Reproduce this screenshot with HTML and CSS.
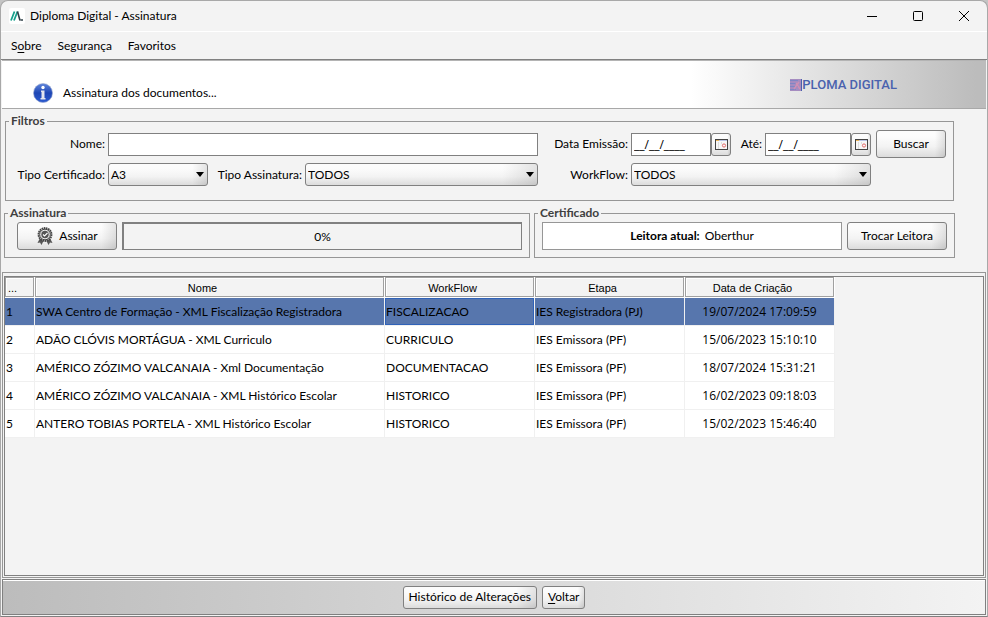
FILE: index.html
```html
<!DOCTYPE html>
<html lang="pt-BR">
<head>
    <meta charset="UTF-8">
    <meta name="viewport" content="width=device-width, initial-scale=1.0">
    <title>Diploma Digital - Assinatura</title>
    <link rel="stylesheet" href="styles.css">
</head>
<body>
    <div class="window">
        <header class="titlebar">
            <svg class="app-icon" viewBox="0 0 16 16" aria-hidden="true">
                <rect width="16" height="16" rx="2" fill="#fff"/>
                <path d="M2 12.500L5.500 3.500M5 12.500L8.500 3.500" stroke="#16a08c" stroke-width="1.800" fill="none"/>
                <path d="M8.500 3.500L11 12.500" stroke="#2d3e46" stroke-width="1.600" fill="none"/>
                <path d="M11.500 12h2.500" stroke="#2d3e46" stroke-width="1.400"/>
            </svg>
            <h1 class="title">Diploma Digital - Assinatura</h1>
            <div class="window-controls">
                <button type="button" aria-label="Minimizar"><svg viewBox="0 0 10 10"><path d="M0 5.500h10"/></svg></button>
                <button type="button" aria-label="Maximizar"><svg viewBox="0 0 10 10"><rect x="0.500" y="0.500" width="9" height="9" rx="1"/></svg></button>
                <button type="button" aria-label="Fechar"><svg viewBox="0 0 10 10"><path d="M0 0L10 10M10 0L0 10"/></svg></button>
            </div>
        </header>

        <nav class="menubar">
            <a href="#sobre">S<u>o</u>bre</a>
            <a href="#seguranca">Segurança</a>
            <a href="#favoritos">Favoritos</a>
        </nav>

        <div class="banner">
            <svg class="info-icon" viewBox="0 0 20 20" aria-hidden="true">
                <defs>
                    <linearGradient id="info" x1="0" y1="0" x2="0" y2="1">
                        <stop offset="0" stop-color="#5f86dc"/>
                        <stop offset="0.500" stop-color="#1e46b4"/>
                        <stop offset="1" stop-color="#2c5bd0"/>
                    </linearGradient>
                </defs>
                <circle cx="10" cy="10" r="9.500" fill="url(#info)" stroke="#9aa7cc" stroke-width="0.600"/>
                <circle cx="10" cy="4.500" r="1.700" fill="#fff"/>
                <path d="M8 7.500h3.500v7.500h1V16.500h-5v-1.500h1v-6h-.5z" fill="#e4e6ee"/>
            </svg>
            <p>Assinatura dos documentos...</p>
            <div class="brand">
                <svg viewBox="0 0 12 12" aria-hidden="true">
                    <rect width="11" height="12" fill="#a58cc0"/>
                    <path d="M0 1.500h8M0 4.500h7M0 7.500h8M0 10.500h6" stroke="#7f86c4" stroke-width="1"/>
                    <path d="M4 10L9 3M6 4l4 6" stroke="#cf8fb4" stroke-width="1.400"/>
                    <path d="M11.500 0v12" stroke="#4a62ae" stroke-width="1"/>
                </svg>
                <span>PLOMA DIGITAL</span>
            </div>
        </div>

        <main>
            <form class="forms">
                <fieldset class="filters">
                    <legend>Filtros</legend>
                    <div class="filter-grid">
                        <label for="nome">Nome:</label>
                        <input id="nome" class="nome" type="text">
                        <label for="emissao">Data Emissão:</label>
                        <div class="dates">
                            <input id="emissao" type="text" value="__/__/____">
                            <button type="button" class="calendar" aria-label="Escolher data de emissão">
                                <svg viewBox="0 0 13 11"><rect x="0.500" y="0.500" width="12" height="10" fill="#f7f7f7" stroke="#444"/><path d="M1 1.500h11" stroke="#b9c4e6"/><path d="M1 1.500h3" stroke="#e9b45a"/><path d="M3.500 3v7M6.500 3v2" stroke="#ddd"/><circle cx="9" cy="6.500" r="1.600" fill="none" stroke="#e26a6a"/></svg>
                            </button>
                            <label for="ate">Até:</label>
                            <input id="ate" type="text" value="__/__/____">
                            <button type="button" class="calendar" aria-label="Escolher data final">
                                <svg viewBox="0 0 13 11"><rect x="0.500" y="0.500" width="12" height="10" fill="#f7f7f7" stroke="#444"/><path d="M1 1.500h11" stroke="#b9c4e6"/><path d="M1 1.500h3" stroke="#e9b45a"/><path d="M3.500 3v7M6.500 3v2" stroke="#ddd"/><circle cx="9" cy="6.500" r="1.600" fill="none" stroke="#e26a6a"/></svg>
                            </button>
                        </div>
                        <button type="button" class="btn search">Buscar</button>

                        <label for="certificado">Tipo Certificado:</label>
                        <div class="combo"><select id="certificado"><option>A3</option></select></div>
                        <label for="assinatura">Tipo Assinatura:</label>
                        <div class="combo"><select id="assinatura"><option>TODOS</option></select></div>
                        <label for="workflow">WorkFlow:</label>
                        <div class="combo"><select id="workflow"><option>TODOS</option></select></div>
                    </div>
                </fieldset>

                <div class="panels">
                    <fieldset class="signing">
                        <legend>Assinatura</legend>
                        <div class="panel-row">
                            <button type="button" class="btn sign">
                                <svg viewBox="0 0 18 18" aria-hidden="true">
                                    <path d="M4 11L1.500 16l2.500-.5L5.500 18 8 13M14 11l2.500 5-2.500-.5-1.500 2.500L10 13" fill="#555"/>
                                    <circle cx="9" cy="7.500" r="6.500" fill="#eee" stroke="#444" stroke-width="1.800" stroke-dasharray="1.600 0.600"/>
                                    <circle cx="9" cy="7.500" r="5.300" fill="none" stroke="#444" stroke-width="1"/>
                                    <circle cx="9" cy="7.500" r="3.700" fill="#555"/>
                                    <path d="M7 7.500l1.500 1.500L11.500 6" fill="none" stroke="#fff" stroke-width="1.100"/>
                                </svg>
                                Assinar
                            </button>
                            <div class="progress" role="progressbar" aria-valuenow="0" aria-valuemin="0" aria-valuemax="100">0%</div>
                        </div>
                    </fieldset>
                    <fieldset class="certificate">
                        <legend>Certificado</legend>
                        <div class="panel-row">
                            <div class="reader"><b>Leitora atual:</b> Oberthur</div>
                            <button type="button" class="btn swap">Trocar Leitora</button>
                        </div>
                    </fieldset>
                </div>
            </form>

            <div class="table-frame">
                <div class="table-area">
                    <table>
                        <colgroup>
                            <col class="col-num">
                            <col class="col-name">
                            <col class="col-std">
                            <col class="col-std">
                            <col class="col-std">
                        </colgroup>
                        <thead>
                            <tr>
                                <th><div class="first">...</div></th>
                                <th><div>Nome</div></th>
                                <th><div>WorkFlow</div></th>
                                <th><div>Etapa</div></th>
                                <th><div>Data de Criação</div></th>
                            </tr>
                        </thead>
                        <tbody>
                            <tr class="selected">
                                <td>1</td>
                                <td>SWA Centro de Formação - XML Fiscalização Registradora</td>
                                <td class="focused">FISCALIZACAO</td>
                                <td>IES Registradora (PJ)</td>
                                <td class="date">19/07/2024 17:09:59</td>
                            </tr>
                            <tr>
                                <td>2</td>
                                <td>ADÃO CLÓVIS MORTÁGUA - XML Curriculo</td>
                                <td>CURRICULO</td>
                                <td>IES Emissora (PF)</td>
                                <td class="date">15/06/2023 15:10:10</td>
                            </tr>
                            <tr>
                                <td>3</td>
                                <td>AMÉRICO ZÓZIMO VALCANAIA - Xml Documentação</td>
                                <td>DOCUMENTACAO</td>
                                <td>IES Emissora (PF)</td>
                                <td class="date">18/07/2024 15:31:21</td>
                            </tr>
                            <tr>
                                <td>4</td>
                                <td>AMÉRICO ZÓZIMO VALCANAIA - XML Histórico Escolar</td>
                                <td>HISTORICO</td>
                                <td>IES Emissora (PF)</td>
                                <td class="date">16/02/2023 09:18:03</td>
                            </tr>
                            <tr>
                                <td>5</td>
                                <td>ANTERO TOBIAS PORTELA - XML Histórico Escolar</td>
                                <td>HISTORICO</td>
                                <td>IES Emissora (PF)</td>
                                <td class="date">15/02/2023 15:46:40</td>
                            </tr>
                        </tbody>
                    </table>
                </div>
            </div>
        </main>

        <footer class="actions">
            <button type="button" class="btn small">Histórico de Alterações</button>
            <button type="button" class="btn small"><span><u>V</u>oltar</span></button>
        </footer>
    </div>
</body>
</html>
```

FILE: styles.css
```css
* {
    box-sizing: border-box;
}
body {
    margin: 0;
    background: #c4c4c4;
    color: #000;
    font: 12px/16px Lato, "Open Sans", sans-serif;
}
button, input, select {
    margin: 0;
    color: inherit;
    font: inherit;
}
u {
    text-underline-offset: 2px;
}

.window {
    display: flex;
    flex-direction: column;
    height: 100vh;
    border: 1px solid #a8a8a8;
    border-bottom-color: #808080;
    border-radius: 8px 8px 0 0;
    background: #f3f3f3;
    overflow: hidden;
}

/* title bar */
.titlebar {
    display: flex;
    align-items: center;
    height: 31px;
    padding-left: 8px;
    border-bottom: 1px solid #fff;
}
.app-icon {
    width: 16px;
    height: 16px;
    margin-right: 5px;
}
.title {
    margin: 0;
    font-size: 12px;
    font-weight: normal;
}
.window-controls {
    display: flex;
    align-self: stretch;
    margin-left: auto;
}
.window-controls button {
    display: flex;
    align-items: center;
    justify-content: center;
    width: 46px;
    padding: 0;
    border: 0;
    background: none;
}
.window-controls svg {
    width: 10px;
    height: 10px;
    fill: none;
    stroke: #000;
    overflow: visible;
}

.menubar {
    display: flex;
    gap: 16px;
    height: 28px;
    padding: 6px 10px;
    border-bottom: 1px solid #808080;
}
.menubar a {
    color: #000;
    text-decoration: none;
}

/* banner */
.banner {
    display: flex;
    align-items: center;
    height: 49px;
    margin: 0 1px;
    padding: 16px 89px 0 31px;
    border-top: 1px solid #b4b4b4;
    border-bottom: 1px solid #a8a8a8;
    background: linear-gradient(to right, #fff 70%, #bcbcbc 99%);
}
.info-icon {
    width: 20px;
    height: 20px;
    margin-right: 10px;
}
.banner p {
    margin: 0;
}
.brand {
    display: flex;
    align-items: center;
    margin: 0 0 16px auto;
    color: #4a62ae;
    font: 500 13px/16px Roboto, sans-serif;
}
.brand svg {
    width: 12px;
    height: 12px;
}

main {
    display: flex;
    flex: 1;
    flex-direction: column;
    min-height: 0;
}
fieldset {
    min-width: 0;
    margin: 0;
    padding: 0;
    border: 1px solid #969696;
}
legend {
    margin-left: 3px;
    padding: 0 2px;
    color: #404040;
    font-weight: bold;
}

/* filters */
.forms {
    padding: 4px 32px 0 3px;
}
.filters {
    margin: 0 1px;
    padding: 1px 7px 14px 0;
}
.filter-grid {
    display: grid;
    grid-template-columns: 99px 100px 91px 1fr 87px 240px 72px;
    grid-template-rows: 28px 23px;
    gap: 5px 3px;
    align-items: center;
}
.filter-grid label {
    text-align: right;
    white-space: nowrap;
}
.nome {
    grid-column: span 3;
}
input {
    width: 100%;
    min-width: 0;
    height: 23px;
    padding: 0 2px;
    border: 1px solid #808080;
    border-radius: 0;
    background: #fff;
    font-family: "Open Sans", sans-serif;
}
.dates {
    display: grid;
    grid-template-columns: 80px 20px 34px 1fr 20px;
    align-items: center;
}
.dates label {
    margin-right: 3px;
}
.btn, .calendar, select {
    border: 1px solid #808080;
    border-radius: 3px;
    background: linear-gradient(to right, transparent 85%, rgba(0, 0, 0, 0.1)), linear-gradient(#fcfcfc 20%, #f3f3f3 60%, #dcdcdc);
}
.btn {
    display: flex;
    align-items: center;
    justify-content: center;
    height: 28px;
    padding: 0;
    white-space: nowrap;
}
.search {
    margin-left: 2px;
}
.calendar {
    display: flex;
    align-items: center;
    justify-content: center;
    height: 23px;
    padding: 0;
}
.calendar svg {
    width: 13px;
    height: 11px;
}
.combo {
    position: relative;
}
.combo::after {
    content: "";
    position: absolute;
    top: 9px;
    right: 4px;
    border: 4px solid transparent;
    border-top: 5px solid #000;
    border-bottom: 0;
    pointer-events: none;
}
select {
    display: block;
    width: 100%;
    height: 23px;
    padding: 0 2px;
    appearance: none;
}

/* signing and certificate */
.panels {
    display: grid;
    grid-template-columns: 526fr 421fr;
    gap: 4px;
    padding-top: 4px;
}
.panel-row {
    display: flex;
    gap: 5px;
    padding: 1px 7px 7px;
}
.signing .panel-row {
    padding-left: 12px;
}
.sign, .swap {
    flex: none;
    width: 100px;
}
.sign {
    gap: 5px;
}
.sign svg {
    width: 18px;
    height: 18px;
}
.progress, .reader {
    flex: 1;
    height: 28px;
    line-height: 26px;
    text-align: center;
}
.progress {
    border: 1px solid #808080;
    border-top-width: 2px;
    border-left-width: 2px;
}
.reader {
    border: 1px solid #969696;
    background: #fff;
}
.reader b {
    margin-right: 2px;
}

/* table */
.table-frame {
    display: flex;
    flex: 1;
    min-height: 0;
    margin: 14px 1px 1px;
    padding: 3px 1px 1px;
    border: 1px solid #969696;
}
.table-area {
    flex: 1;
    border: 1px solid #808080;
    overflow: auto;
}
table {
    width: 830px;
    border-collapse: separate;
    border-spacing: 0;
    table-layout: fixed;
}
.col-num {
    width: 30px;
}
.col-name {
    width: 350px;
}
.col-std {
    width: 150px;
}
th {
    padding: 0 1px 1px 0;
    background: #fff;
    font: 11px/20px "Liberation Sans", Arial, sans-serif;
}
th div {
    height: 20px;
    padding-right: 14px;
    border: 1px solid #a0a0a0;
    background: #f3f3f3;
    box-shadow: inset 1px 1px #fff;
}
th .first {
    padding: 0 0 0 2px;
    text-align: left;
}
td {
    height: 28px;
    padding: 0 1px;
    border-right: 1px solid #f0f0f0;
    border-bottom: 1px solid #f0f0f0;
    background: #fff;
    white-space: nowrap;
}
.selected td {
    background: #5776ad;
}
.selected .focused {
    box-shadow: inset 0 0 0 1px #2f62b8;
}
.date {
    font-family: "Open Sans", sans-serif;
    text-align: center;
}

.actions {
    display: flex;
    align-items: center;
    justify-content: center;
    gap: 5px;
    height: 36px;
    margin: 0 1px 1px;
    border: 1px solid #808080;
    background: linear-gradient(to right, #bcbcbc, #f3f3f3);
    box-shadow: inset 0 1px #fff;
}
.small {
    height: 23px;
    padding: 0 5px;
}
```
